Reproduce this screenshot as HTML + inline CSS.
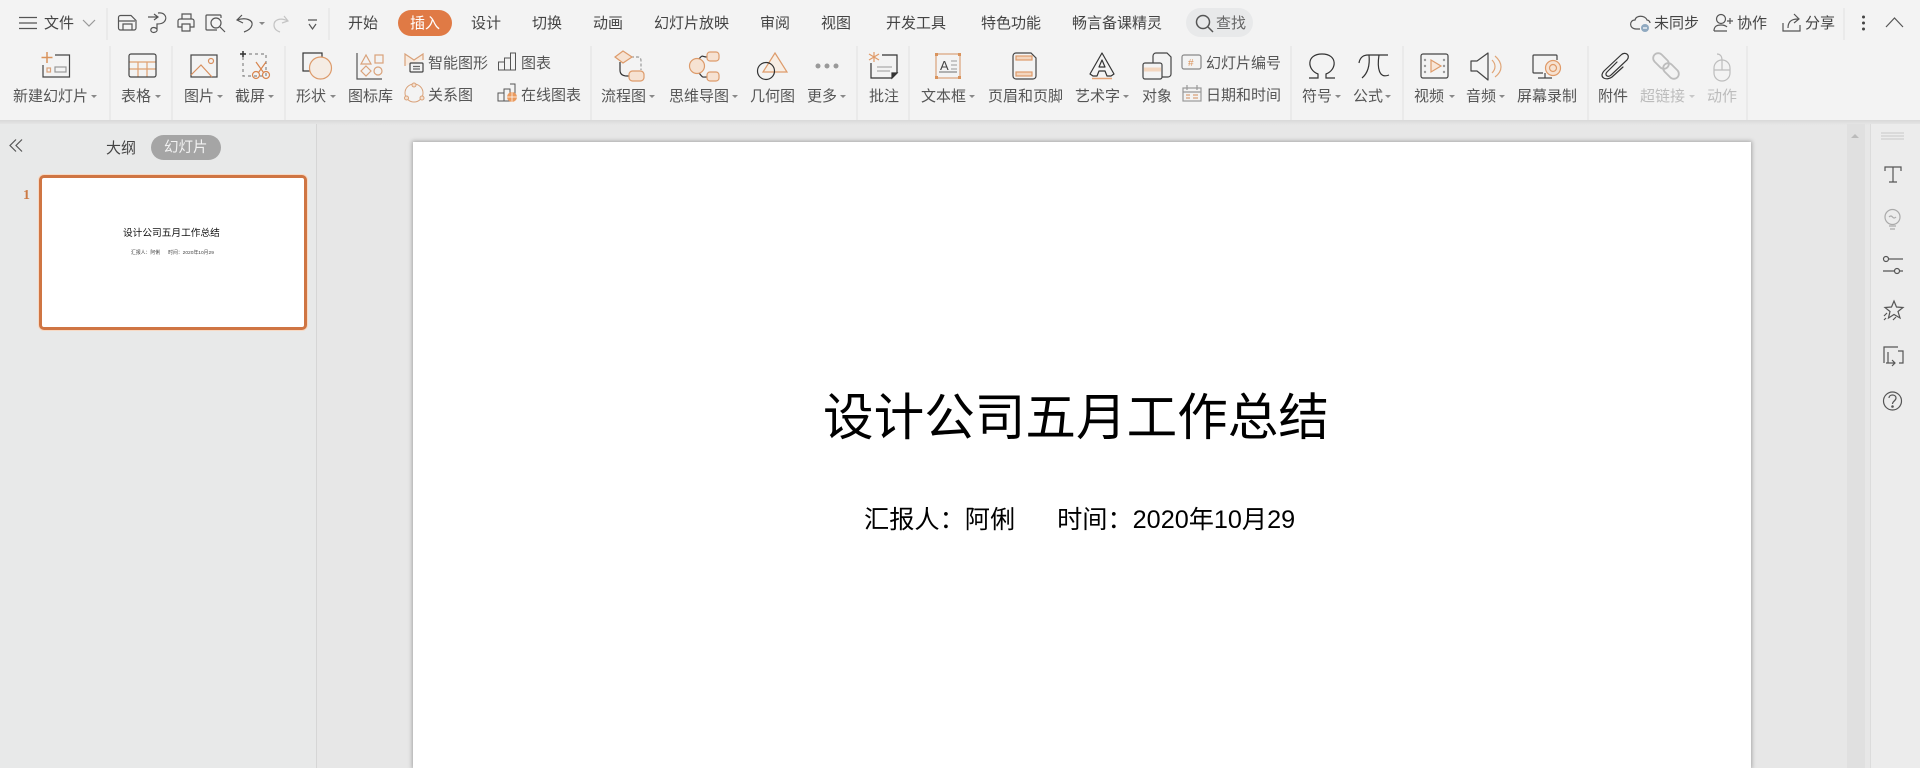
<!DOCTYPE html>
<html lang="zh-CN"><head><meta charset="utf-8"><title>设计公司五月工作总结</title>
<style>
html,body{margin:0;padding:0;width:1920px;height:768px;overflow:hidden;background:#e7e7e7;font-family:"Liberation Sans","Noto Sans CJK SC",sans-serif}
body{position:relative}
#top{position:absolute;left:0;top:0;width:1920px;height:120px;background:#f3f3f3}
#sh{position:absolute;left:0;top:120px;width:1920px;height:5px;background:linear-gradient(#d9d9d9,#e7e7e7)}
#left{position:absolute;left:0;top:124px;width:316px;height:644px;background:#e8e9e9;border-right:1px solid #d6d6d6}
#scroll{position:absolute;left:1847px;top:124px;width:18px;height:644px;background:#e0e0e0}
#rp{position:absolute;left:1870px;top:124px;width:50px;height:644px;background:#ececec;border-left:1px solid #dcdcdc}
#slide{position:absolute;left:413px;top:142px;width:1338px;height:626px;background:#fff;box-shadow:0 0 4px 1px rgba(0,0,0,.28)}
#thumb{position:absolute;left:39px;top:175px;width:262px;height:149px;background:#fff;border:3px solid #cf7543;border-radius:5px;box-shadow:0 0 0 1px #f7d9c4}
svg{position:absolute;left:0;top:0;filter:blur(.3px)}
.t{position:absolute;white-space:nowrap;line-height:20px;font-size:15px;color:#555;filter:blur(.25px)}
.b{top:14px;color:#444}
.r{top:87px}
.u{top:54px}
.l{top:86px}
.g{color:#bcbcbc}
</style></head><body>
<div id="top"></div><div id="sh"></div><div id="left"></div><div id="scroll"></div><div id="rp"></div>
<div id="slide"></div>
<div id="thumb"></div>

<div class="t" style="left:823px;top:388px;font-size:50.6px;line-height:60px;color:#000">设计公司五月工作总结</div>
<div class="t" style="left:864px;top:505px;font-size:25.2px;line-height:30px;color:#000;white-space:pre">汇报人：阿俐      时间：2020年10月29</div>
<div class="t" style="left:123px;top:224px;font-size:9.7px;color:#111">设计公司五月工作总结</div>
<div class="t" style="left:131px;top:244px;font-size:4.85px;color:#444;white-space:pre">汇报人：阿俐      时间：2020年10月29</div>

<div style="position:absolute;left:398px;top:10px;width:54px;height:26px;border-radius:13px;background:#e07a45"></div>
<div style="position:absolute;left:1186px;top:8px;width:67px;height:29px;border-radius:15px;background:#e8e9ea"></div>
<div style="position:absolute;left:151px;top:135px;width:70px;height:25px;border-radius:13px;background:#a5a5a5"></div>

<div class="t b" style="left:44px">文件</div>
<div class="t b" style="left:348px">开始</div>
<div class="t b" style="left:410px;color:#fff">插入</div>
<div class="t b" style="left:471px">设计</div>
<div class="t b" style="left:532px">切换</div>
<div class="t b" style="left:593px">动画</div>
<div class="t b" style="left:654px">幻灯片放映</div>
<div class="t b" style="left:760px">审阅</div>
<div class="t b" style="left:821px">视图</div>
<div class="t b" style="left:886px">开发工具</div>
<div class="t b" style="left:981px">特色功能</div>
<div class="t b" style="left:1072px">畅言备课精灵</div>
<div class="t b" style="left:1216px;color:#666">查找</div>
<div class="t b" style="left:1654px">未同步</div>
<div class="t b" style="left:1737px">协作</div>
<div class="t b" style="left:1805px">分享</div>

<div class="t r" style="left:13px">新建幻灯片</div>
<div class="t r" style="left:121px">表格</div>
<div class="t r" style="left:184px">图片</div>
<div class="t r" style="left:235px">截屏</div>
<div class="t r" style="left:296px">形状</div>
<div class="t r" style="left:348px">图标库</div>
<div class="t u" style="left:428px">智能图形</div>
<div class="t l" style="left:428px">关系图</div>
<div class="t u" style="left:521px">图表</div>
<div class="t l" style="left:521px">在线图表</div>
<div class="t r" style="left:601px">流程图</div>
<div class="t r" style="left:669px">思维导图</div>
<div class="t r" style="left:750px">几何图</div>
<div class="t r" style="left:807px">更多</div>
<div class="t r" style="left:869px">批注</div>
<div class="t r" style="left:921px">文本框</div>
<div class="t r" style="left:988px">页眉和页脚</div>
<div class="t r" style="left:1075px">艺术字</div>
<div class="t r" style="left:1142px">对象</div>
<div class="t u" style="left:1206px">幻灯片编号</div>
<div class="t l" style="left:1206px">日期和时间</div>
<div class="t r" style="left:1302px">符号</div>
<div class="t r" style="left:1353px">公式</div>
<div class="t r" style="left:1414px">视频</div>
<div class="t r" style="left:1466px">音频</div>
<div class="t r" style="left:1517px">屏幕录制</div>
<div class="t r" style="left:1598px">附件</div>
<div class="t r g" style="left:1640px">超链接</div>
<div class="t r g" style="left:1707px">动作</div>

<div class="t" style="left:106px;top:139px;font-size:15px;color:#444">大纲</div>
<div class="t" style="left:164px;top:138px;font-size:14.5px;color:#f2f2f2">幻灯片</div>
<div class="t" style="left:23px;top:186px;font-size:14px;font-weight:bold;color:#cc7a45;font-family:'Liberation Serif',serif">1</div>

<svg width="1920" height="768" viewBox="0 0 1920 768" fill="none" stroke-width="1.2">
<!-- separators -->
<g stroke="#e0e0e0" stroke-width="1">
<path d="M107 8V40M329 8V40M1844 8V40M110 46V120M172 46V120M285 46V120M591 46V120M857 46V120M909 46V120M1291 46V120M1403 46V120M1588 46V120M1747 46V120"/>
</g>
<!-- dropdown arrows -->
<g fill="#888" stroke="none">
<path d="M91 95h6l-3 3zM155 95h6l-3 3zM217 95h6l-3 3zM268 95h6l-3 3zM330 95h6l-3 3zM649 95h6l-3 3zM732 95h6l-3 3zM840 95h6l-3 3zM969 95h6l-3 3zM1123 95h6l-3 3zM1335 95h6l-3 3zM1385 95h6l-3 3zM1449 95h6l-3 3zM1499 95h6l-3 3zM259 22h6l-3 3z"/>
<path d="M1689 95h6l-3 3z" fill="#c8c8c8"/>
</g>
<!-- menu / file -->
<g stroke="#555"><path d="M19 17.5H37M19 23H37M19 28.5H37"/><path d="M83 20L89 26L95 20" stroke="#999"/></g>
<!-- quick access -->
<g stroke="#555">
<path d="M118.500 17.500a2 2 0 0 1 2-2H131l5 5V28a2 2 0 0 1-2 2H120.500a2 2 0 0 1-2-2zM119 21H135M123 30V24H132V30"/>
<path d="M148 17H157M154 14L158 17L154 20M158 13C165 12 168 18 164 22C162 24 159 24 157 24V31M157 31C154 34 150 32 151 29C152 27 155 27 157 29"/>
<path d="M182 19V14H191V19M178 21a2 2 0 0 1 2-2H192a2 2 0 0 1 2 2V27H190M182 27H178V21M182 24H190V31H182z"/>
<path d="M217 30H207a1 1 0 0 1-1-1V16a1 1 0 0 1 1-1H220a1 1 0 0 1 1 1V18"/><circle cx="216" cy="23" r="5"/><path d="M220 27L225 32"/>
<path d="M242 15L237 20L243 23M237 20C246 17 253 20 252 25C251 29 247 31 244 32"/>
<path d="M284 16L288 21L282 23M288 21C280 17 274 20 274 25C274 29 277 31 280 32" stroke="#c4c4c4"/>
<path d="M308 20H317M309 24L312.500 29L316 24" stroke="#555"/>
</g>
<!-- search -->
<g stroke="#555" stroke-width="1.5"><circle cx="1203" cy="22" r="6.500"/><path d="M1208 27L1213 32"/></g>
<!-- right top -->
<g stroke="#555">
<path d="M1640 29H1636C1629 29 1629 20 1635 20C1636 15 1645 15 1647 20C1649 20 1650 22 1650 23"/>
<circle cx="1645" cy="28" r="4" fill="#8fa9c0" stroke="none"/><path d="M1643 28H1647" stroke="#fff"/>
<circle cx="1721" cy="19" r="4.500"/><path d="M1714 31C1714 26 1717 25 1721 25C1724 25 1726 26 1727 27M1714 31H1727M1727 21H1733M1730 18V24"/>
<path d="M1783 23V31H1800V25M1788 28C1788 21 1792 19 1798 19M1794 14L1799 19L1794 23"/>
</g>
<g fill="#444" stroke="none"><circle cx="1863.500" cy="17" r="1.500"/><circle cx="1863.500" cy="23" r="1.500"/><circle cx="1863.500" cy="29" r="1.500"/></g>
<path d="M1886 27L1894.500 18L1903 27" stroke="#555"/>

<!-- 新建幻灯片 -->
<path d="M55 55H69.500V77H43V65" stroke="#444"/><path d="M47 52V63M41.500 57.500H52.500" stroke="#d9935c" stroke-width="1.500"/>
<rect x="47" y="68" width="3.500" height="4" stroke="#d9a27a"/><rect x="55" y="67" width="11" height="5" stroke="#999"/>
<!-- 表格 -->
<path d="M129 62H156M129 69H156M138 62V77M147 62V77" stroke="#dfa070"/><rect x="129" y="54" width="27" height="23" rx="2" stroke="#444"/>
<!-- 图片 -->
<rect x="191" y="55" width="26" height="22" stroke="#444"/><path d="M191 75L201 65L212 77" stroke="#d88f5e"/><circle cx="211" cy="61" r="2.500" stroke="#d88f5e"/>
<!-- 截屏 -->
<rect x="243" y="54" width="23" height="22" stroke="#888" stroke-dasharray="3 3"/><path d="M243 51V57M240 54H246" stroke="#333" stroke-width="1.500"/>
<g stroke="#d8854e"><circle cx="256" cy="75" r="3.500"/><circle cx="266" cy="75" r="3.500"/><path d="M258.500 72.500L266 62M263.500 72.500L256 62"/></g>
<!-- 形状 -->
<rect x="303" y="53" width="19" height="18" stroke="#333"/><circle cx="320.500" cy="68" r="11" fill="#f5ece4" stroke="#dd9b6b"/>
<!-- 图标库 -->
<path d="M357 53V79H382" stroke="#555"/><g stroke="#d9a27a"><path d="M361 64L366 55L371 64Z"/><rect x="375" y="55" width="8" height="8"/><path d="M366 66L371 71L366 76L361 71Z"/><circle cx="378" cy="71" r="4"/></g>
<!-- 智能图形 -->
<path d="M405 66V54L414 60L423 54V60" stroke="#d9a27a" fill="#f8ebe0"/><rect x="410" y="63" width="13" height="9" rx="1" fill="#f3f3f3" stroke="#444"/><path d="M413 66.500H420M413 69H420" stroke="#666"/>
<!-- 关系图 -->
<g stroke="#d9a27a" stroke-width="1"><circle cx="414" cy="93" r="9"/><circle cx="414" cy="85" r="2" fill="#f5e0cf"/><circle cx="406.500" cy="98" r="2" fill="#f5e0cf"/><circle cx="422" cy="98" r="2" fill="#f5e0cf"/></g>
<!-- 图表 -->
<path d="M498.500 62H504.500V70H498.500ZM504.500 58H510.500V70H504.500ZM510.500 53H515.500V70H510.500Z" stroke="#555" stroke-width="1"/>
<!-- 在线图表 -->
<path d="M498 93H504V101H498ZM504 89H510V101H504ZM510 84H515V96" stroke="#555" stroke-width="1"/><circle cx="512" cy="97" r="5" fill="#ea9a5e"/><path d="M507 97H517M512 92V102" stroke="#fff" stroke-width=".7"/>
<!-- 流程图 -->
<path d="M620 62V70Q620 76 627 76H630" stroke="#333"/><path d="M631 57H638Q641 57 641 61V70" stroke="#999" stroke-dasharray="3 2"/>
<path d="M623 51L632 57L623 63L615 57Z" fill="#f6e2d2" stroke="#dd9b6b"/><rect x="629" y="71" width="15" height="10" rx="3.500" fill="#f6e2d2" stroke="#dd9b6b"/>
<!-- 思维导图 -->
<path d="M699 59C703 54 702 57 707 57M699 73C703 78 702 77 707 77" stroke="#333"/>
<circle cx="697" cy="66" r="7.500" fill="#f6e2d2" stroke="#dd9b6b"/><rect x="707" y="52" width="12" height="9" rx="3" fill="#f6e2d2" stroke="#dd9b6b"/><rect x="707" y="72" width="12" height="9" rx="3" fill="#f6e2d2" stroke="#dd9b6b"/>
<!-- 几何图 -->
<path d="M775 53L787 72H763Z" fill="#f8eee4" stroke="#dd9b6b"/><circle cx="766" cy="71" r="8.500" stroke="#333"/>
<!-- 更多 -->
<g fill="#999" stroke="none"><circle cx="818" cy="66" r="2.500"/><circle cx="827" cy="66" r="2.500"/><circle cx="836" cy="66" r="2.500"/></g>
<!-- 批注 -->
<path d="M874 52V62M869 54L879 60M879 54L869 60" stroke="#e09a68"/><path d="M882 55H897V73L892 78H871V63" stroke="#333"/><path d="M877 67H892M877 71H890" stroke="#aaa"/><path d="M892 78L897 73H892Z" fill="#333" stroke="#333"/>
<!-- 文本框 -->
<rect x="936" y="54" width="24" height="24" stroke="#d9a27a"/><rect x="935" y="53" width="3" height="3" fill="#d9935c" stroke="none"/><rect x="958" y="53" width="3" height="3" fill="#d9935c" stroke="none"/><rect x="935" y="76" width="3" height="3" fill="#d9935c" stroke="none"/><rect x="958" y="76" width="3" height="3" fill="#d9935c" stroke="none"/>
<path d="M951 61H957M951 65H957M951 69H957" stroke="#aaa"/><path d="M939 72H957" stroke="#888"/>
<text x="940" y="70" font-family="Liberation Sans,sans-serif" font-size="13" fill="#444" stroke="none">A</text>
<!-- 页眉页脚 -->
<path d="M1016 53H1031L1036 58V76a3 3 0 0 1-3 3H1016a3 3 0 0 1-3-3V56a3 3 0 0 1 3-3Z" stroke="#444"/><rect x="1016" y="56" width="16" height="4" fill="#f3d6bf" stroke="#dd9b6b"/><rect x="1016" y="72" width="16" height="4" fill="#f3d6bf" stroke="#dd9b6b"/>
<!-- 艺术字 -->
<path d="M1102 53L1114 74L1111 76H1107L1105 71H1099L1097 76H1093L1090 74ZM1102 60L1099 67H1105Z" stroke="#333" stroke-linejoin="round"/><path d="M1092 78.500H1112" stroke="#e3a478" stroke-width="1.500"/>
<!-- 对象 -->
<path d="M1153 63V56a3 3 0 0 1 3-3H1167L1171 57V74a3 3 0 0 1-3 3H1162" stroke="#444"/><rect x="1143" y="63" width="19" height="16" rx="2" fill="#f3f3f3" stroke="#444"/><rect x="1144" y="67.500" width="17" height="4" fill="#f3d6bf" stroke="none"/>
<!-- 幻灯片编号 -->
<rect x="1182" y="55" width="19" height="14" rx="2" stroke="#888"/><text x="1188" y="66" font-family="Liberation Sans,sans-serif" font-size="10" fill="#d9935c" stroke="none">#</text>
<!-- 日期时间 -->
<rect x="1183" y="88" width="18" height="13" stroke="#999"/><path d="M1183 92H1201M1187 85V90M1197 85V90" stroke="#999"/><path d="M1186 95H1190M1193 95H1198M1186 98H1190M1193 98H1198" stroke="#d9a27a"/>
<!-- Ω -->
<path d="M1309 78H1318V74C1307 70 1306 54 1322 54C1338 54 1337 70 1326 74V78H1335" stroke="#333"/>
<!-- π -->
<path d="M1359 63C1360 57 1364 55 1368 55H1388M1369 55C1370 65 1368 73 1362 78M1379 55C1377 68 1379 79 1389 75" stroke="#333"/>
<!-- 视频 -->
<rect x="1421" y="54" width="27" height="24" rx="2" stroke="#444"/><path d="M1431 60L1441 66L1431 72Z" fill="#f8e6d8" stroke="#dd9b6b"/>
<g fill="#999" stroke="none"><circle cx="1425" cy="60" r="1.200"/><circle cx="1425" cy="66" r="1.200"/><circle cx="1425" cy="72" r="1.200"/><circle cx="1444" cy="60" r="1.200"/><circle cx="1444" cy="66" r="1.200"/><circle cx="1444" cy="72" r="1.200"/></g>
<!-- 音频 -->
<path d="M1471 61H1477L1488 53V80L1477 71H1471Z" stroke="#444" stroke-linejoin="round"/><path d="M1492 60C1496 64 1496 69 1492 73M1495 56C1503 63 1503 71 1495 77" stroke="#e0a678"/>
<!-- 屏幕录制 -->
<path d="M1543 73H1534a1 1 0 0 1-1-1V56a1 1 0 0 1 1-1H1556a1 1 0 0 1 1 1V60M1545 73V78M1538 78H1552" stroke="#444"/><circle cx="1553" cy="68" r="7.500" fill="#f6e2d2" stroke="#e09a68"/><circle cx="1553" cy="68" r="3.500" stroke="#e09a68"/>
<!-- 附件 -->
<path d="M1617 62L1607 72C1604 75 1608 78 1611 75L1627 60C1631 55 1625 51 1621 55L1604 71C1598 78 1607 81 1612 77L1623 67" stroke="#333" stroke-linecap="round"/>
<!-- 超链接 -->
<g stroke="#bdbdbd" stroke-width="1.800"><rect x="1652" y="56" width="18" height="10" rx="5" transform="rotate(45 1661 61)"/><rect x="1662" y="66" width="18" height="10" rx="5" transform="rotate(45 1671 71)"/></g>
<!-- 动作 -->
<g stroke="#bdbdbd"><rect x="1714" y="60" width="16" height="21" rx="8"/><path d="M1714 70H1730M1722 60V70M1722 60C1722 56 1720 54 1717 54"/></g>

<!-- left panel -->
<path d="M16 139.500L10 145.500L16 151.500M22 139.500L16 145.500L22 151.500" stroke="#555"/>
<!-- scrollbar arrow -->
<path d="M1851 138L1855 134L1859 138Z" fill="#bbb"/>
<!-- right panel -->
<path d="M1881 133H1904M1881 136H1904M1881 139H1904" stroke="#d0d0d0"/>
<g stroke="#555">
<path d="M1885 171V167H1901V171M1893 167V182M1889 182H1897"/>
<g stroke="#aaa"><circle cx="1892.500" cy="217" r="7.500"/><path d="M1889 217Q1891 215 1892.500 217T1896 217M1889 226H1896M1890 229H1895"/></g>
<circle cx="1886" cy="259" r="2.500"/><path d="M1889 259H1903"/><circle cx="1897" cy="271" r="2.500"/><path d="M1883 271H1894M1900 271H1903"/>
<path d="M1894 301L1896.500 307L1903 307.500L1898 311.500L1900 318L1894 314.500L1888.500 318L1890 311.500L1885 307.500L1891.500 307Z"/><path d="M1884 316L1887 313M1884 320L1886 318M1893 320L1896 317" />
<path d="M1898 347H1884V363M1898 351H1903V363H1899M1886 363H1895M1892 360L1895 363L1892 366M1888 352V363"/>
<circle cx="1892.500" cy="401" r="9"/><path d="M1889 398C1889 394 1896 394 1896 398C1896 401 1892.500 401 1892.500 404"/><circle cx="1892.500" cy="406.500" r=".7" fill="#555"/>
</g>
</svg>
</body></html>
